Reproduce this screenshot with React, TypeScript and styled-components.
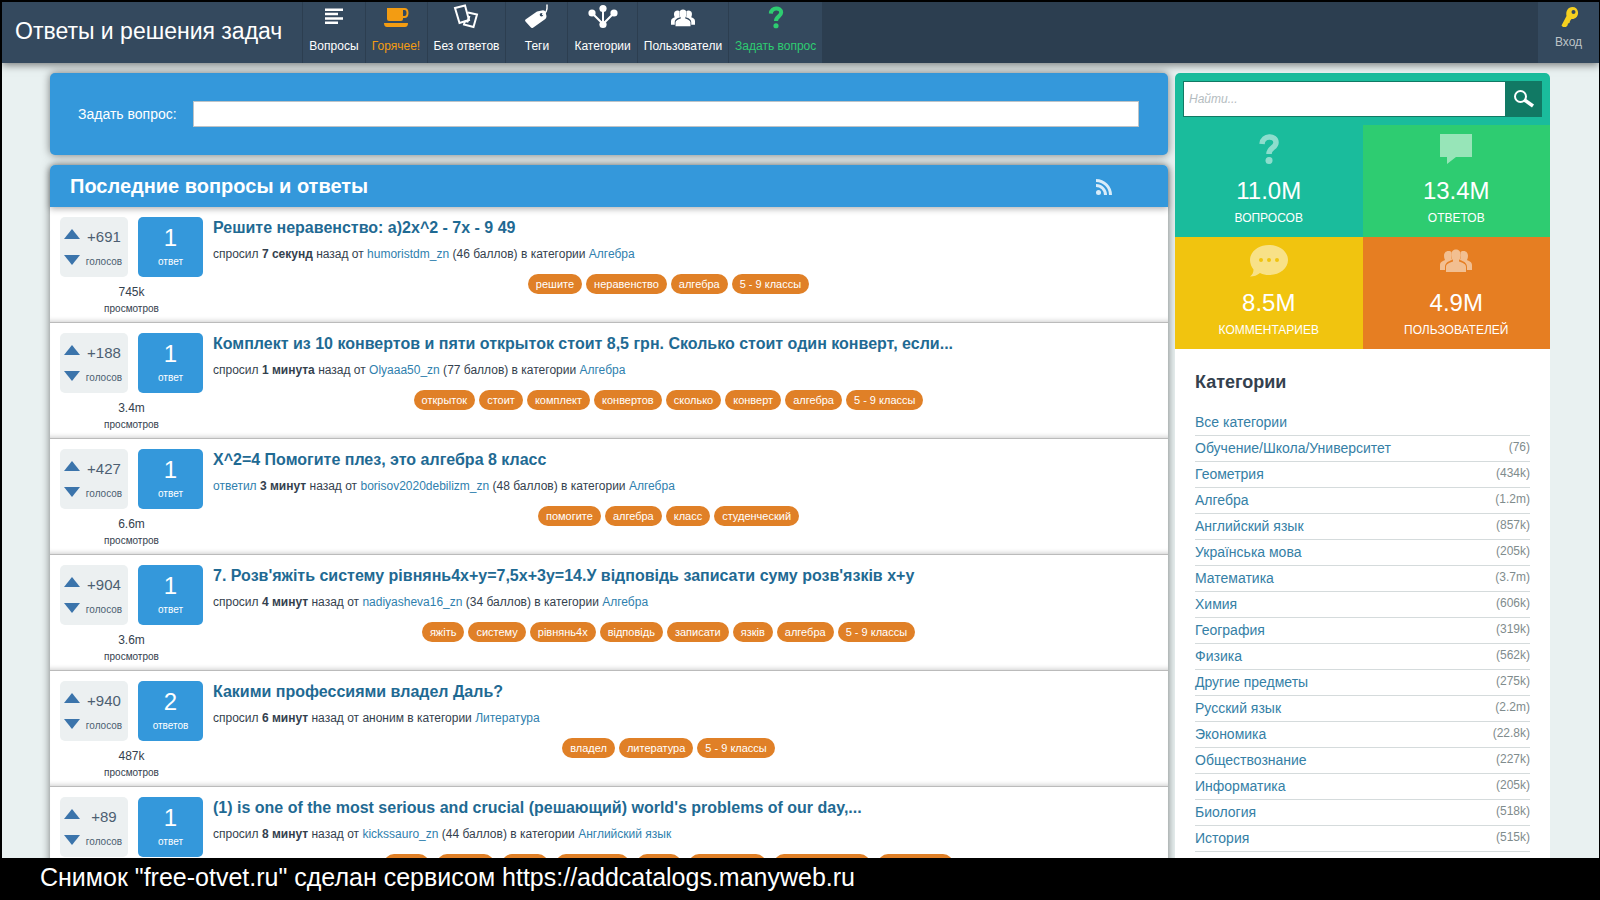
import React from "react";
import styled, { createGlobalStyle, css } from "styled-components";

const GlobalStyle = createGlobalStyle`
  * { box-sizing: border-box; }
  body {
    margin: 0;
    background: #000;
    font-family: "Liberation Sans", Arial, sans-serif;
    font-size: 12px;
    line-height: 16px;
    color: #34414e;
  }
  a { color: #2f7fae; text-decoration: none; }
  button, input { font-family: inherit; border-radius: 0; }
`;

const Screen = styled.div`
  display: flex;
  flex-direction: column;
  height: 100vh;
  padding: 2px 1px 0 2px;
`;

const Viewport = styled.div`
  flex: 1;
  min-height: 0;
  overflow: hidden;
  background: #e9f1f1;
`;

const TopBar = styled.header`
  position: relative;
  display: flex;
  height: 61px;
  background: #2c3e50;
  box-shadow: 0 2px 8px rgba(0, 0, 0, 0.5);
`;

const Brand = styled.a`
  display: flex;
  align-items: center;
  padding: 0 20px 4px 13px;
  background: #34495e;
  color: #fff;
  font-size: 23px;
  line-height: 28px;
  white-space: nowrap;
`;

const Nav = styled.nav`
  display: flex;
  flex: 1;
`;

const NavItem = styled.a<{ $color?: string }>`
  display: flex;
  flex-direction: column;
  align-items: center;
  gap: 6px;
  min-width: 62px;
  padding: 2px 6px 0;
  border-left: 1px solid #2c3e50;
  background: #34495e;
  color: ${(p) => p.$color ?? "#fff"};
  white-space: nowrap;
`;

const Login = styled(NavItem)`
  padding: 2px 2px 0;
  gap: 2px;
  color: #bdc3c7;
`;

const Layout = styled.div`
  display: flex;
  align-items: flex-start;
  gap: 7px;
  padding: 10px 49px 0 48px;
`;

const MainColumn = styled.main`
  flex: 1;
  min-width: 0;
  display: flex;
  flex-direction: column;
  gap: 10px;
`;

const panel = css`
  border-radius: 5px;
  box-shadow: 0 0 8px rgba(0, 0, 0, 0.5);
`;

const AskForm = styled.form`
  ${panel}
  display: flex;
  align-items: center;
  gap: 16px;
  height: 82px;
  padding: 0 29px 0 28px;
  background: #3498db;
  color: #fff;
  font-size: 14px;
`;

const AskInput = styled.input`
  flex: 1;
  height: 26px;
  padding: 0 4px;
  border: 1px solid #bdc3c7;
  background: #fff;
`;

const QuestionPanel = styled.section`
  ${panel}
  background: #fff;
`;

const PanelHead = styled.div`
  position: relative;
  display: flex;
  align-items: center;
  justify-content: space-between;
  height: 42px;
  padding: 0 56px 0 20px;
  border-radius: 5px 5px 0 0;
  background: #3498db;
  box-shadow: 0 2px 6px rgba(0, 0, 0, 0.3);
  color: #fff;
`;

const PanelTitle = styled.h1`
  margin: 0;
  font-size: 20px;
  line-height: 24px;
`;

const QuestionRow = styled.article`
  display: flex;
  gap: 10px;
  height: 116px;
  padding: 10px 44px 0 10px;
  border-bottom: 1px solid #bbb;
  box-shadow: inset 0 -5px 5px -4px rgba(0, 0, 0, 0.2);
`;

const Stats = styled.div`
  display: grid;
  grid-template-columns: 68px 65px;
  column-gap: 10px;
  align-content: start;
`;

const VoteBox = styled.div`
  display: flex;
  gap: 4px;
  height: 60px;
  padding: 12px 4px 8px 4px;
  border-radius: 5px;
  background: #ecf0f1;
`;

const VoteButtons = styled.div`
  display: flex;
  flex-direction: column;
  gap: 16px;
`;

const VoteButton = styled.button`
  width: 16px;
  height: 10px;
  padding: 0;
  border: 0;
  background: none;
  line-height: 0;
`;

const Count = styled.div`
  flex: 1;
  display: flex;
  flex-direction: column;
  align-items: center;
  gap: 9px;
  color: #4d5f72;
  font-size: 15px;
`;

const Small = styled.span`
  font-size: 10px;
  line-height: 16px;
`;

const AnswerBox = styled.div`
  display: flex;
  flex-direction: column;
  align-items: center;
  gap: 2px;
  height: 60px;
  padding-top: 7px;
  border-radius: 5px;
  background: #3498db;
  color: #fff;
`;

const AnswerCount = styled.span`
  font-size: 24px;
  line-height: 28px;
`;

const Views = styled.div`
  grid-column: 1 / -1;
  display: flex;
  flex-direction: column;
  align-items: center;
  gap: 1px;
  padding-top: 7px;
`;

const QuestionBody = styled.div`
  flex: 1;
  min-width: 0;
  padding-top: 1px;
`;

const QuestionTitle = styled.h2`
  margin: 0 0 8px;
  font-size: 16px;
  line-height: 20px;
  a { color: #1f6a93; }
`;

const Meta = styled.p`
  margin: 0 0 12px;
`;

const Tags = styled.ul`
  display: flex;
  justify-content: center;
  gap: 4px;
  margin: 0;
  padding: 0;
  list-style: none;
`;

const Tag = styled.a`
  display: block;
  padding: 0 8px;
  border-radius: 10px;
  background: #e08027;
  color: #fff;
  font-size: 11px;
  line-height: 20px;
  white-space: nowrap;
`;

const TagStub = styled.li<{ $width: number }>`
  width: ${(p) => p.$width}px;
  height: 20px;
  margin: 0 2px;
  border-radius: 10px;
  background: #e08027;
`;

const Sidebar = styled.aside`
  width: 375px;
  border-radius: 5px 5px 0 0;
  background: #fff;
`;

const SearchForm = styled.form`
  display: flex;
  height: 52px;
  padding: 8px;
  border-radius: 5px 5px 0 0;
  background: #1abc9c;
`;

const SearchInput = styled.input`
  flex: 1;
  min-width: 0;
  padding: 0 5px;
  border: 1px solid #117964;
  background: #fff;
  font-size: 12px;
  &::placeholder { color: #b4bcc0; font-style: italic; }
`;

const SearchButton = styled.button`
  display: flex;
  align-items: center;
  justify-content: center;
  width: 36px;
  padding: 0;
  border: 0;
  background: #117964;
  color: #fff;
`;

const StatGrid = styled.div`
  display: grid;
  grid-template-columns: 1fr 1fr;
`;

const StatTile = styled.div<{ $bg: string }>`
  display: flex;
  flex-direction: column;
  align-items: center;
  height: 112px;
  padding-top: 6px;
  background: ${(p) => p.$bg};
  color: #fff;
  svg { opacity: 0.5; }
`;

const StatValue = styled.span`
  margin: 10px 0 5px;
  font-size: 24px;
  line-height: 28px;
`;

const Categories = styled.nav`
  padding: 22px 20px;
`;

const CategoriesTitle = styled.h2`
  margin: 0 0 17px;
  font-size: 18px;
  line-height: 22px;
`;

const CategoryList = styled.ul`
  margin: 0;
  padding: 0;
  list-style: none;
`;

const CategoryItem = styled.li`
  display: flex;
  justify-content: space-between;
  height: 26px;
  padding-top: 3px;
  border-bottom: 1px solid #d5dbdc;
  color: #7f8c8d;
  a { font-size: 14px; line-height: 18px; color: #3580a6; }
`;

const Caption = styled.footer`
  flex: none;
  height: 42px;
  padding: 5px 38px;
  color: #fff;
  font-size: 25px;
  line-height: 28px;
`;

const ListIcon = () => (
  <svg width="28" height="28" viewBox="0 0 28 28" fill="currentColor">
    <path d="M5 4.500h18V7H5zM5 8.800h13v2.500H5zM5 13.200h18v2.500H5zM5 17.500h13V20H5z" />
  </svg>
);
const CupIcon = () => (
  <svg width="28" height="28" viewBox="0 0 28 28" fill="currentColor">
    <path d="M5 4h16v11q0 2-2 2H7q-2 0-2-2zM2 19h24q0 4-3 4H5q-3 0-3-4z" />
    <path d="M20 5h2.500c4 0 4 8 0 8H20" fill="none" stroke="currentColor" strokeWidth="2" />
  </svg>
);
const CardsIcon = () => (
  <svg width="28" height="28" viewBox="0 0 28 28" fill="none" stroke="currentColor" strokeWidth="2">
    <path d="M3 4l10-2.500 4 14.500-9.500 3z" />
    <path d="M16 8.500l9 2-3.500 12.500-9.500-2.500 1-3.500M13 17l2.500 .5 2-5.500" />
  </svg>
);
const TagIcon = () => (
  <svg width="28" height="28" viewBox="0 0 28 28" fill="currentColor">
    <path fillRule="evenodd" d="M2.500 15.500L14 7.500l6-1.200q2 0 2.500 1.500l1 4.500q0 2-1.500 3l-12 8.500q-1.500 .8-2.500-.7l-5-5.500q-1-1.200 0-2.100zM18.500 9a1.800 1.800 0 1 0 0 3.600 1.800 1.800 0 0 0 0-3.600z" />
    <path d="M19 10.500c4.500-1 5.500-4 5-10" fill="none" stroke="currentColor" strokeWidth="1.500" />
  </svg>
);
const NodesIcon = () => (
  <svg width="32" height="28" viewBox="0 0 32 28" fill="currentColor">
    <path d="M5 9l11 11L27 9M16 5v16" fill="none" stroke="currentColor" strokeWidth="2" />
    <circle cx="5" cy="9" r="3.600" /><circle cx="16" cy="4.500" r="3.600" /><circle cx="27" cy="9" r="3.600" /><circle cx="16" cy="20.500" r="3.600" />
  </svg>
);
const UsersIcon = ({ width = 24, height = 28 }: { width?: number; height?: number }) => (
  <svg width={width} height={height} viewBox="0 -3 32 36" fill="currentColor">
    <path d="M5 24H0v-5c0-3 3-4 5-5C3 10 4 5 8.500 5c1.500 0 2.500 .5 3 1-1 3-.5 5 .5 8-4 1.500-7 3-7 7zM27 24h5v-5c0-3-3-4-5-5C29 10 28 5 23.500 5c-1.500 0-2.500 .5-3 1 1 3 .5 5-.5 8 4 1.500 7 3 7 7z" />
    <path d="M6 26v-5c0-3 3-4 7-5.500v-1c-3-4-2.500-11 3-11s6 7 3 11v1c4 1.500 7 2.500 7 5.500v5z" />
  </svg>
);
const QuestionIcon = ({ width = 16, height = 28 }: { width?: number; height?: number }) => (
  <svg width={width} height={height} viewBox={height > 30 ? "0 -3 20 36" : "0 -3 20 38"}>
    <path d="M3 10C3.500 1 17 1 17 8.500c0 5.500-7 5-7 11.500" fill="none" stroke="currentColor" strokeWidth="5.500" />
    <circle cx="10" cy="26.500" r="3.500" fill="currentColor" />
  </svg>
);
const KeyIcon = () => (
  <svg width="28" height="28" viewBox="0 0 28 28" fill="#f5d020">
    <path fillRule="evenodd" d="M6.500 21.500l5-9.500c-1-5 1.500-9 6-9 6 0 7.500 8 3 11-1.500 1-3 1-4 1l-1.500 2-.5 2-1.500 .5-.5 2-1.500 1.500H8zM18.500 6a2 2 0 1 0 0 4 2 2 0 0 0 0-4z" />
  </svg>
);
const SearchIcon = () => (
  <svg width="20" height="18" viewBox="0 0 20 18" fill="none" stroke="currentColor">
    <circle cx="6.500" cy="6.500" r="5.500" strokeWidth="2" />
    <path d="M10.500 10l8.500 6" strokeWidth="3.500" />
  </svg>
);
const RssIcon = () => (
  <svg width="16" height="18" viewBox="0 -2 16 18" fill="none" stroke="#d9ecf9" strokeWidth="3">
    <circle cx="2.500" cy="13.500" r="2.500" fill="#d9ecf9" stroke="none" />
    <path d="M0 6.500a9.500 9.500 0 0 1 9.500 9.500M0 1.500a14.500 14.500 0 0 1 14.500 14.500" />
  </svg>
);
const AnswerIcon = () => (
  <svg width="32" height="36" viewBox="0 0 32 36" fill="currentColor">
    <path d="M0 3h32v23H16l-9 7v-7H0z" />
  </svg>
);
const CommentIcon = () => (
  <svg width="40" height="36" viewBox="0 0 40 36" fill="currentColor">
    <path fillRule="evenodd" d="M20 2c10.500 0 19 6.500 19 15s-8.500 15-19 15c-3.500 0-6-.5-9-2-3 2.500-6 3.500-10 3.500 2.500-2 3.500-4 3.500-7C2.500 24 1 20.500 1 17 1 8.500 9.500 2 20 2zm-8 13a2 2 0 1 0 0 4 2 2 0 0 0 0-4zm8 0a2 2 0 1 0 0 4 2 2 0 0 0 0-4zm8 0a2 2 0 1 0 0 4 2 2 0 0 0 0-4z" />
  </svg>
);

const Arrow = ({ down = false }: { down?: boolean }) => (
  <svg width="16" height="10" viewBox="0 0 16 10" fill="#3b74ab">
    <path d={down ? "M0 0h16L8 10z" : "M0 10h16L8 0z"} />
  </svg>
);

type Question = {
  votes: string;
  answers: number;
  views?: string;
  title: string;
  verb?: string;
  time: string;
  author?: string;
  points?: string;
  category: string;
  tags: string[];
  tagStubs?: number[];
};

const QUESTIONS: Question[] = [
  { votes: "+691", answers: 1, views: "745k", title: "Решите неравенство: а)2x^2 - 7x - 9 49", time: "7 секунд", author: "humoristdm_zn", points: "46", category: "Алгебра", tags: ["решите", "неравенство", "алгебра", "5 - 9 классы"] },
  { votes: "+188", answers: 1, views: "3.4m", title: "Комплект из 10 конвертов и пяти открыток стоит 8,5 грн. Сколько стоит один конверт, если...", time: "1 минута", author: "Olyaaa50_zn", points: "77", category: "Алгебра", tags: ["открыток", "стоит", "комплект", "конвертов", "сколько", "конверт", "алгебра", "5 - 9 классы"] },
  { votes: "+427", answers: 1, views: "6.6m", title: "Х^2=4 Помогите плез, это алгебра 8 класс", verb: "ответил", time: "3 минут", author: "borisov2020debilizm_zn", points: "48", category: "Алгебра", tags: ["помогите", "алгебра", "класс", "студенческий"] },
  { votes: "+904", answers: 1, views: "3.6m", title: "7. Розв'яжіть систему рівнянь4x+y=7,5x+3y=14.У відповідь записати суму розв'язків x+y", time: "4 минут", author: "nadiyasheva16_zn", points: "34", category: "Алгебра", tags: ["яжіть", "систему", "рівнянь4x", "відповідь", "записати", "язків", "алгебра", "5 - 9 классы"] },
  { votes: "+940", answers: 2, views: "487k", title: "Какими профессиями владел Даль?", time: "6 минут", category: "Литература", tags: ["владел", "литература", "5 - 9 классы"] },
  { votes: "+89", answers: 1, title: "(1) is one of the most serious and crucial (решающий) world's problems of our day,...", time: "8 минут", author: "kickssauro_zn", points: "44", category: "Английский язык", tags: [], tagStubs: [45, 57, 46, 73, 44, 77, 96, 75] },
];

const CATEGORIES: [string, string?][] = [
  ["Все категории"],
  ["Обучение/Школа/Университет", "76"],
  ["Геометрия", "434k"],
  ["Алгебра", "1.2m"],
  ["Английский язык", "857k"],
  ["Українська мова", "205k"],
  ["Математика", "3.7m"],
  ["Химия", "606k"],
  ["География", "319k"],
  ["Физика", "562k"],
  ["Другие предметы", "275k"],
  ["Русский язык", "2.2m"],
  ["Экономика", "22.8k"],
  ["Обществознание", "227k"],
  ["Информатика", "205k"],
  ["Биология", "518k"],
  ["История", "515k"],
];

const QuestionItem = ({ q }: { q: Question }) => (
  <QuestionRow>
    <Stats>
      <VoteBox>
        <VoteButtons>
          <VoteButton type="button" aria-label="Голосовать за"><Arrow /></VoteButton>
          <VoteButton type="button" aria-label="Голосовать против"><Arrow down /></VoteButton>
        </VoteButtons>
        <Count>
          <span>{q.votes}</span>
          <Small>голосов</Small>
        </Count>
      </VoteBox>
      <AnswerBox>
        <AnswerCount>{q.answers}</AnswerCount>
        <Small>{q.answers === 1 ? "ответ" : "ответов"}</Small>
      </AnswerBox>
      {q.views && (
        <Views>
          <span>{q.views}</span>
          <Small>просмотров</Small>
        </Views>
      )}
    </Stats>
    <QuestionBody>
      <QuestionTitle><a href="#question">{q.title}</a></QuestionTitle>
      <Meta>
        {q.verb ? <a href="#answer">{q.verb}</a> : "спросил"} <b>{q.time}</b> назад от{" "}
        {q.author ? <><a href="#user">{q.author}</a> ({q.points} баллов)</> : "аноним"} в категории{" "}
        <a href="#category">{q.category}</a>
      </Meta>
      <Tags>
        {q.tags.map((t) => <li key={t}><Tag href="#tag">{t}</Tag></li>)}
        {q.tagStubs?.map((w) => <TagStub key={w} $width={w} />)}
      </Tags>
    </QuestionBody>
  </QuestionRow>
);

export default function App() {
  return (
    <Screen>
      <GlobalStyle />
      <Viewport>
        <TopBar>
          <Brand href="#home">Ответы и решения задач</Brand>
          <Nav>
            <NavItem href="#questions"><ListIcon />Вопросы</NavItem>
            <NavItem href="#hot" $color="#f39c12"><CupIcon />Горячее!</NavItem>
            <NavItem href="#unanswered"><CardsIcon />Без ответов</NavItem>
            <NavItem href="#tags"><TagIcon />Теги</NavItem>
            <NavItem href="#categories"><NodesIcon />Категории</NavItem>
            <NavItem href="#users"><UsersIcon />Пользователи</NavItem>
            <NavItem href="#ask" $color="#2ecc71"><QuestionIcon />Задать вопрос</NavItem>
          </Nav>
          <Login href="#login"><KeyIcon />Вход</Login>
        </TopBar>
        <Layout>
          <MainColumn>
            <AskForm>
              <label htmlFor="ask">Задать вопрос:</label>
              <AskInput id="ask" type="text" />
            </AskForm>
            <QuestionPanel>
              <PanelHead>
                <PanelTitle>Последние вопросы и ответы</PanelTitle>
                <RssIcon />
              </PanelHead>
              {QUESTIONS.map((q) => <QuestionItem key={q.title} q={q} />)}
            </QuestionPanel>
          </MainColumn>
          <Sidebar>
            <SearchForm>
              <SearchInput type="text" placeholder="Найти..." aria-label="Найти" />
              <SearchButton type="button" aria-label="Поиск"><SearchIcon /></SearchButton>
            </SearchForm>
            <StatGrid>
              <StatTile $bg="#1abc9c"><QuestionIcon width={20} height={36} /><StatValue>11.0M</StatValue>ВОПРОСОВ</StatTile>
              <StatTile $bg="#2ecc71"><AnswerIcon /><StatValue>13.4M</StatValue>ОТВЕТОВ</StatTile>
              <StatTile $bg="#f1c40f"><CommentIcon /><StatValue>8.5M</StatValue>КОММЕНТАРИЕВ</StatTile>
              <StatTile $bg="#e67e22"><UsersIcon width={32} height={36} /><StatValue>4.9M</StatValue>ПОЛЬЗОВАТЕЛЕЙ</StatTile>
            </StatGrid>
            <Categories>
              <CategoriesTitle>Категории</CategoriesTitle>
              <CategoryList>
                {CATEGORIES.map(([name, count]) => (
                  <CategoryItem key={name}>
                    <a href="#category">{name}</a>
                    {count && <span>({count})</span>}
                  </CategoryItem>
                ))}
              </CategoryList>
            </Categories>
          </Sidebar>
        </Layout>
      </Viewport>
      <Caption>Снимок "free-otvet.ru" сделан сервисом https://addcatalogs.manyweb.ru</Caption>
    </Screen>
  );
}
